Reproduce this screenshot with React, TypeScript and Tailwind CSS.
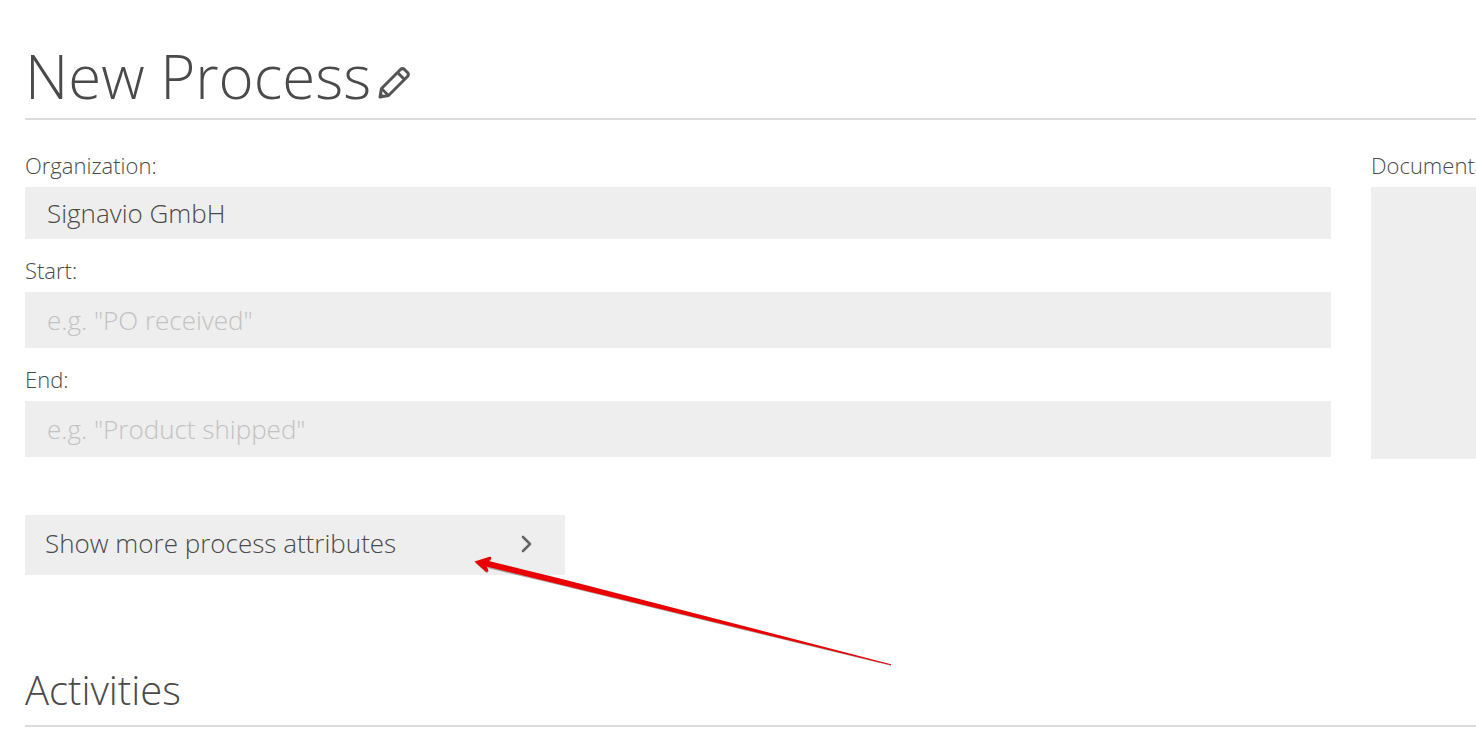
import { useState } from "react";

const fieldClass =
  "block w-full bg-[#eeeeee] px-[22px] text-[26px] font-light text-[#4a4a4a] placeholder:text-[#c2c2c2] placeholder:opacity-100 outline-none";
const labelClass =
  "block mb-[6px] text-[22px] leading-[31px] font-light text-[#4a4a4a] whitespace-nowrap";

function PencilIcon() {
  return (
    <svg
      width="34"
      height="34"
      viewBox="0 0 34 34"
      fill="none"
      stroke="#555"
      strokeWidth="3"
      strokeLinejoin="round"
    >
      <path d="M3 31 L4.500 22.500 L23.500 3.500 Q25.500 1.800 27.500 3.500 L30.500 6.500 Q32.200 8.500 30.500 10.500 L11.500 29.500 Z" />
      <path d="M20.500 6.500 L27.500 13.500" />
      <path d="M4.500 22.500 L11.500 29.500" strokeWidth="2.600" />
      <path d="M2 32 L3.200 26 L8 30.800 Z" fill="#555" stroke="none" />
    </svg>
  );
}

function ChevronIcon() {
  return (
    <svg
      width="12"
      height="18"
      viewBox="0 0 12 18"
      fill="none"
      stroke="#666"
      strokeWidth="2.600"
      strokeLinecap="round"
      strokeLinejoin="round"
    >
      <path d="M2 2 L9 9 L2 16" />
    </svg>
  );
}

function Arrow() {
  return (
    <svg
      className="absolute left-[449px] top-[40px] pointer-events-none"
      width="420"
      height="114"
      viewBox="0 0 420 114"
      aria-hidden="true"
    >
      <path
        d="M1 7.500 L12 17.500 Q14.500 18.500 14.500 16 L13.500 13 L90 31.300 L417 110.800 L417 110 L92 26 L15 7 L17 5 Q18 3 16 2.500 Z"
        fill="#555"
        opacity="0.5"
      />
      <path
        d="M0.500 6.500 L11.500 16.500 Q14.500 17.500 14.300 15 L12.500 11.500 L90 30.500 L417 110.300 L417 109.300 L92 25 L15 6 L17 4 Q17.800 1.500 15.500 1.700 Z"
        fill="#ea0000"
      />
    </svg>
  );
}

export default function App() {
  const [organization, setOrganization] = useState("Signavio GmbH");
  const [start, setStart] = useState("");
  const [end, setEnd] = useState("");
  const [documentation, setDocumentation] = useState("");

  return (
    <main className="overflow-hidden bg-white pl-[25px] pt-9 font-['Open_Sans',sans-serif] font-light text-[#4a4a4a]">
      <header className="flex items-center gap-[6px] border-b-2 border-[#dcdcdc] pb-[2px]">
        <h1 className="text-[60px] leading-[80px] font-light">New Process</h1>
        <button type="button" aria-label="Rename process" className="pt-[14px] cursor-pointer">
          <PencilIcon />
        </button>
      </header>

      <div className="flex gap-10 pt-[30px]">
        <form className="flex-1">
          <label htmlFor="organization" className={labelClass}>
            Organization:
          </label>
          <input
            id="organization"
            className={`${fieldClass} h-[52px]`}
            value={organization}
            onChange={(e) => setOrganization(e.target.value)}
          />

          <label htmlFor="start" className={`${labelClass} mt-4`}>
            Start:
          </label>
          <input
            id="start"
            className={`${fieldClass} h-[56px]`}
            placeholder={'e.g. "PO received"'}
            value={start}
            onChange={(e) => setStart(e.target.value)}
          />

          <label htmlFor="end" className={`${labelClass} mt-4`}>
            End:
          </label>
          <input
            id="end"
            className={`${fieldClass} h-[56px]`}
            placeholder={'e.g. "Product shipped"'}
            value={end}
            onChange={(e) => setEnd(e.target.value)}
          />
        </form>

        {/* Documentation runs off the right side */}
        <div className="w-[105px] overflow-hidden">
          <label htmlFor="documentation" className={labelClass}>
            Documentation:
          </label>
          <textarea
            id="documentation"
            className={`${fieldClass} h-[272px] resize-none`}
            value={documentation}
            onChange={(e) => setDocumentation(e.target.value)}
          />
        </div>
      </div>

      <div className="relative mt-14">
        <button
          type="button"
          className="flex h-[60px] w-[540px] items-center justify-between bg-[#eeeeee] pl-5 pr-8 pb-[3px] text-[26px] font-light cursor-pointer"
        >
          Show more process attributes
          <ChevronIcon />
        </button>
        <Arrow />
      </div>

      <h2 className="mt-[88px] border-b-2 border-[#dcdcdc] pb-2 text-[40px] leading-[54px] font-light">
        Activities
      </h2>
    </main>
  );
}
